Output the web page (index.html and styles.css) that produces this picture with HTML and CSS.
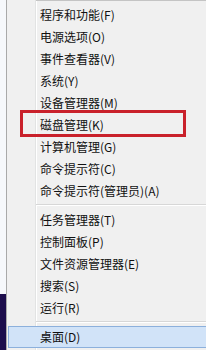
FILE: index.html
```html
<!DOCTYPE html>
<html lang="zh-CN">
<head>
<meta charset="utf-8">
<title>Win+X 菜单</title>
<link rel="stylesheet" href="styles.css">
</head>
<body>
<div class="screen">
  <div class="desktop-edge"><div class="edge-light"></div><div class="edge-dark"></div></div>
  <div class="menu">
    <div class="item">程序和功能(F)</div>
    <div class="item">电源选项(O)</div>
    <div class="item">事件查看器(V)</div>
    <div class="item">系统(Y)</div>
    <div class="item">设备管理器(M)</div>
    <div class="item marked">磁盘管理(K)<span class="mark"></span></div>
    <div class="item">计算机管理(G)</div>
    <div class="item">命令提示符(C)</div>
    <div class="item">命令提示符(管理员)(A)</div>
    <div class="sep"></div>
    <div class="item">任务管理器(T)</div>
    <div class="item">控制面板(P)</div>
    <div class="item">文件资源管理器(E)</div>
    <div class="item">搜索(S)</div>
    <div class="item">运行(R)</div>
    <div class="sep"></div>
    <div class="item hover">桌面(D)</div>
  </div>
</div>
</body>
</html>
```
FILE: styles.css
```css
html, body {
  margin: 0;
  padding: 0;
}
body {
  width: 206px;
  height: 350px;
  overflow: hidden;
  background: #f0f0f0;
  font-family: "Noto Sans CJK SC", "Noto Sans", sans-serif;
}
.screen {
  display: flex;
  height: 350px;
}
.desktop-edge {
  width: 6px;
  display: flex;
  flex-direction: column;
}
.edge-light {
  height: 294px;
  background: #f6f8fb;
}
.edge-dark {
  flex: 1;
  background: #1c0d4c;
}
.menu {
  flex: 1;
  border-left: 1px solid #a9a9a9;
  padding-top: 4px;
  background:
    linear-gradient(#c4c4c4, #c4c4c4) 29px 0 / 100% 1px no-repeat,
    linear-gradient(to right, #f0f0f0 0, #f0f0f0 28px, #e2e3e3 28px, #e2e3e3 29px, #ffffff 29px, #ffffff 30px, #f0f0f0 30px);
  display: flex;
  flex-direction: column;
  position: relative;
}
.item {
  height: 22px;
  line-height: 22px;
  font-size: 12px;
  color: #111111;
  padding-left: 33px;
  white-space: nowrap;
  position: relative;
}
.sep {
  height: 7px;
  box-sizing: border-box;
  margin-left: 29px;
  padding-top: 2px;
}
.sep::before {
  content: "";
  display: block;
  height: 1px;
  background: #d7d7d7;
  border-bottom: 1px solid #ffffff;
}
.hover {
  margin-left: 1px;
  padding-left: 31px;
  background: #d1e3f8;
  border: 1px solid #8cb0dc;
  border-right: none;
  height: 20px;
  line-height: 20px;
}
.mark {
  position: absolute;
  left: 13px;
  top: -4px;
  width: 166px;
  height: 27px;
  box-sizing: border-box;
  border: 3px solid #c9212b;
}
```
